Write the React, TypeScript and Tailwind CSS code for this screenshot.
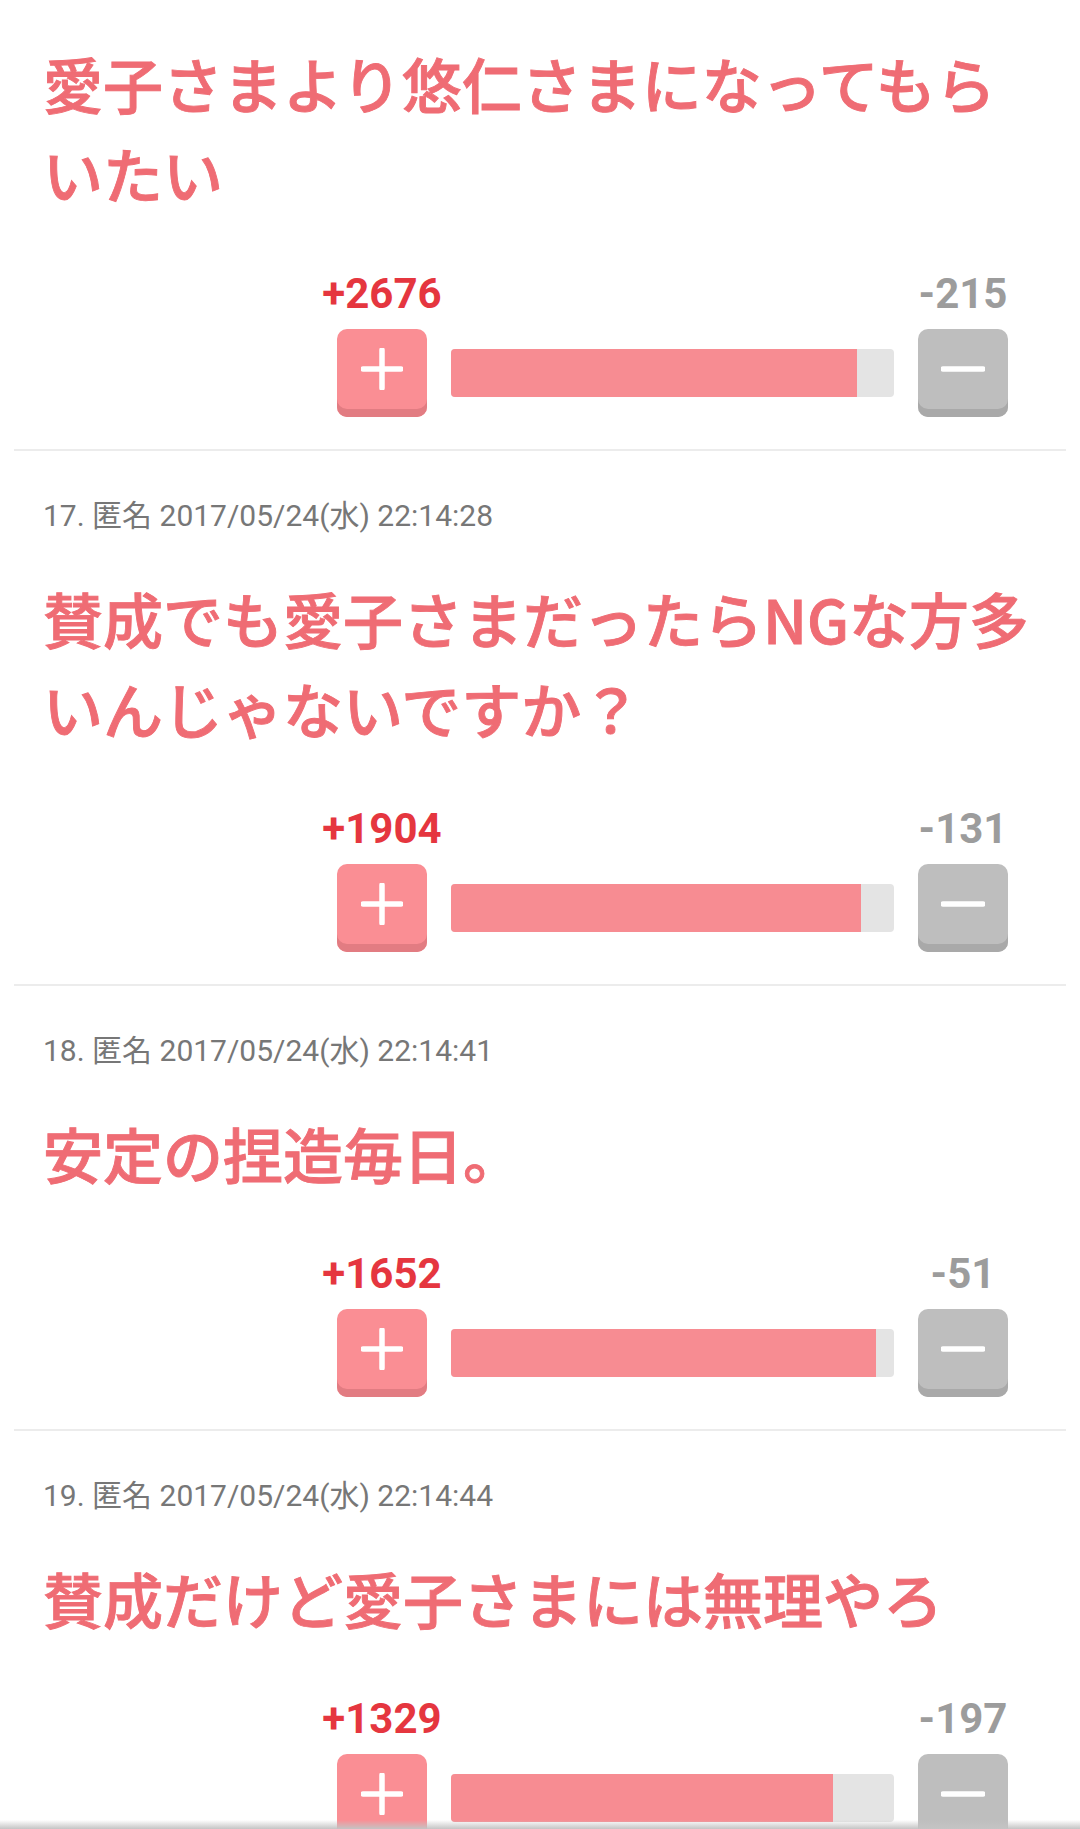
import React from 'react';

type Comment = {
  no?: number;
  date?: string;
  body: string;
  plus: number;
  minus: number;
};

const COMMENTS: Comment[] = [
  { body: '愛子さまより悠仁さまになってもらいたい', plus: 2676, minus: 215 },
  { no: 17, date: '2017/05/24(水) 22:14:28', body: '賛成でも愛子さまだったらNGな方多いんじゃないですか？', plus: 1904, minus: 131 },
  { no: 18, date: '2017/05/24(水) 22:14:41', body: '安定の捏造毎日。', plus: 1652, minus: 51 },
  { no: 19, date: '2017/05/24(水) 22:14:44', body: '賛成だけど愛子さまには無理やろ', plus: 1329, minus: 197 },
];

const jp = { fontFamily: '"Noto Sans CJK JP", sans-serif' };
const num = { fontFamily: 'Roboto, "Noto Sans CJK JP", sans-serif' };

function VoteBar({ plus, minus }: { plus: number; minus: number }) {
  const ratio = (plus / (plus + minus)) * 0.99;
  return (
    <div className="mt-[54px] flex justify-end pr-[58px]">
      <div className="grid grid-cols-[90px_443px_90px] gap-x-[24px]">
        <div className="flex justify-center whitespace-nowrap text-[42px] leading-[44px] font-bold text-[#e5363f]" style={num}>
          +{plus}
        </div>
        <div />
        <div className="flex justify-center whitespace-nowrap text-[42px] leading-[44px] font-bold text-[#9c9c9c]" style={num}>
          -{minus}
        </div>

        {/* plus button */}
        <button
          type="button"
          aria-label="plus"
          className="mt-[13px] h-[88px] w-[90px] rounded-[10px] bg-[#fa8e94] shadow-[inset_0_-8px_0_#e27c82] flex items-center justify-center pb-[8px]"
        >
          <svg width="42" height="42" viewBox="0 0 42 42">
            <path d="M21 2v38M2 21h38" stroke="#fff" strokeWidth="5.5" strokeLinecap="round" />
          </svg>
        </button>

        {/* ratio bar */}
        <div className="mt-[13px] self-center h-[48px] rounded-[4px] bg-[#e4e4e4] overflow-hidden">
          <div className="h-full bg-[#f78c92]" style={{ width: `${ratio * 100}%` }} />
        </div>

        {/* minus button */}
        <button
          type="button"
          aria-label="minus"
          className="mt-[13px] h-[88px] w-[90px] rounded-[10px] bg-[#bebebe] shadow-[inset_0_-8px_0_#a9a9a9] flex items-center justify-center pb-[8px]"
        >
          <svg width="44" height="8" viewBox="0 0 44 8">
            <path d="M2 4h40" stroke="#fff" strokeWidth="5.5" strokeLinecap="round" />
          </svg>
        </button>
      </div>
    </div>
  );
}

function CommentBlock({ c, first }: { c: Comment; first?: boolean }) {
  return (
    <section className={`mx-[14px] border-b-2 border-[#ececec] pl-[29px] pb-[32px] ${first ? 'pt-[38px]' : 'pt-[45px]'}`}>
      {c.no !== undefined && (
        <div className="text-[30px] leading-[40px] text-[#777777] mb-[37px]" style={num}>
          {c.no}. 匿名 {c.date}
        </div>
      )}
      <h2
        className="w-[1005px] text-[60px] leading-[90px] font-medium text-[#ef6c74] [-webkit-text-stroke:0.9px_#ef6c74]"
        style={jp}
      >
        {c.body}
      </h2>
      <VoteBar plus={c.plus} minus={c.minus} />
    </section>
  );
}

export default function App() {
  return (
    <div className="relative h-[1829px] w-[1080px] overflow-hidden bg-white">
      {COMMENTS.map((c, i) => (
        <CommentBlock key={i} c={c} first={i === 0} />
      ))}
      <div className="absolute bottom-0 left-0 right-0 h-[9px] bg-gradient-to-b from-[#ffffff00] to-[#c4c4c4]" />
    </div>
  );
}
